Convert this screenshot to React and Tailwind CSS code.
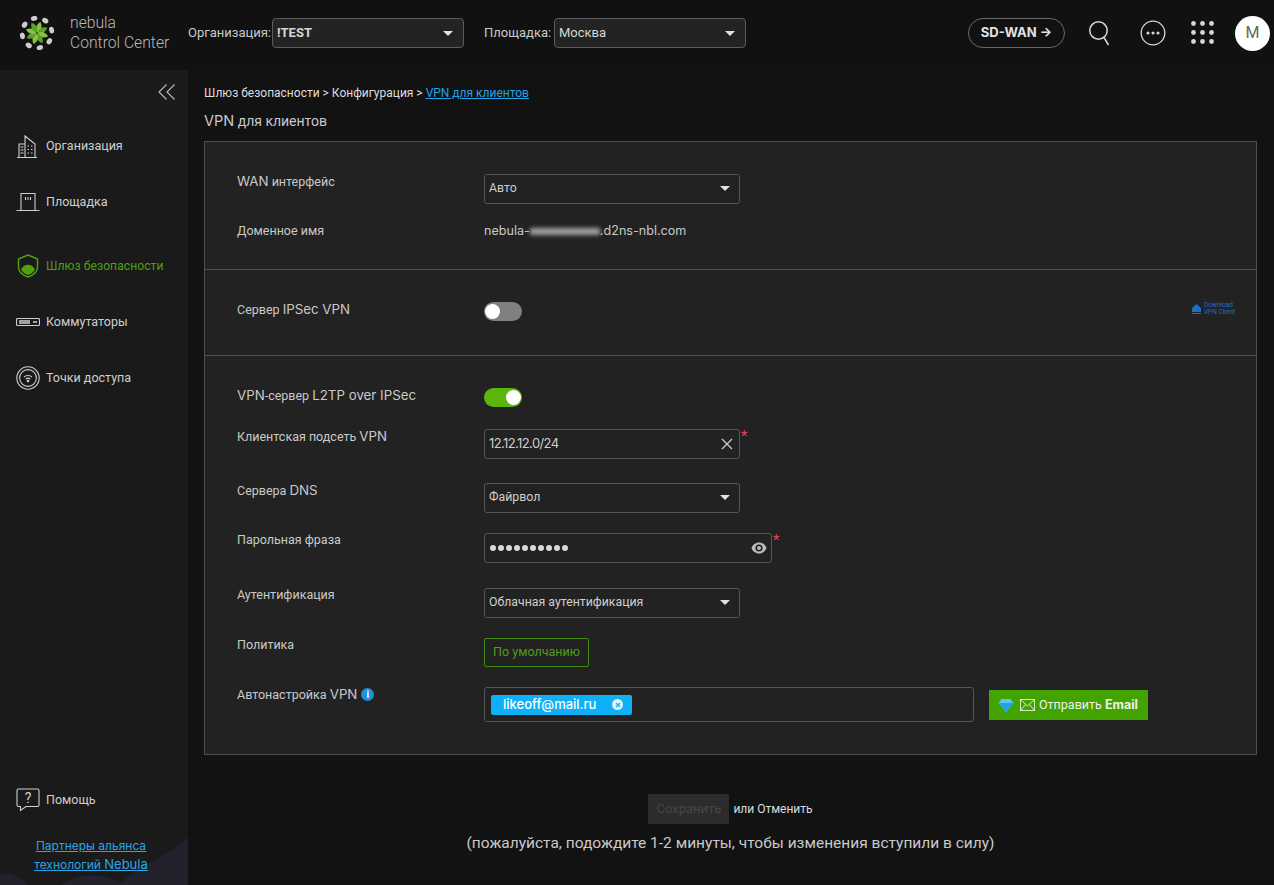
import React from "react";

const INTER = "[font-family:Inter,sans-serif]";

function Logo() {
  const angles = [0, 45, 90, 135, 180, 225, 270, 315];
  return (
    <svg width="34" height="34" viewBox="-17 -17 34 34" className="shrink-0">
      {angles.map((a, i) => (
        <g key={a} transform={`rotate(${a + 10})`}>
          <path d="M0 -0.5 C4 -3 4.5 -7 1.5 -11.5 C-2 -9 -3 -4.5 0 -0.5Z" fill={i % 2 ? "#5f9e2f" : "#86c440"} />
          <ellipse cx="6" cy="-13.6" rx="3.3" ry="2.5" fill="#cdcdcd" transform="rotate(24 6 -13.6)" />
        </g>
      ))}
    </svg>
  );
}

function Caret() {
  return <span className="w-0 h-0 border-l-[5px] border-r-[5px] border-t-[5px] border-l-transparent border-r-transparent border-t-[#e2e2e2]" />;
}

function HeaderSelect({ value, bold }) {
  return (
    <div className={`w-[192px] h-[30px] flex items-center justify-between pl-[4px] pr-[10px] border border-[#5c5c5c] rounded-[4px] bg-[#232323] text-[13px] text-[#d6d6d6] ${bold ? "font-bold" : ""}`}>
      <span>{value}</span>
      <Caret />
    </div>
  );
}

function FormSelect({ value }) {
  return (
    <div className="w-[256px] h-[30px] flex items-center justify-between pl-[4px] pr-[9px] pb-[1px] border border-[#565656] rounded-[3px] text-[12.3px] text-[#cfcfcf]">
      <span>{value}</span>
      <Caret />
    </div>
  );
}

function NavItem({ icon, label, active, className }) {
  return (
    <div className={`flex items-center h-[24px] pl-[16px] ${className}`}>
      <span className="w-[30px] flex items-center">{icon}</span>
      <span className={active ? "text-[12.2px] text-[#4ea00f]" : "text-[12.5px] text-[#cfcfcf]"}>{label}</span>
    </div>
  );
}

function Toggle({ on }) {
  return (
    <div className={`w-[38px] h-[19px] rounded-full flex items-center px-[1px] ${on ? "bg-[#5cb50c] justify-end" : "bg-[#808080] justify-start"}`}>
      <span className="w-[15px] h-[15px] rounded-full bg-white" />
    </div>
  );
}

function Label({ children, className }) {
  return <div className={`w-[247px] shrink-0 text-[12.5px] text-[#c9c9c9] ${className}`}>{children}</div>;
}

function Lat({ children }) {
  return <span className={`text-[13.3px] ${INTER}`}>{children}</span>;
}

const I = { stroke: "#cfcfcf", fill: "none", strokeWidth: 1.1 };

export default function App() {
  return (
    <div className="w-[1274px] h-[885px] overflow-hidden flex flex-col bg-[#121213] [font-family:Roboto,'Liberation_Sans',sans-serif]">
      <header className="h-[70px] shrink-0 bg-[#111112] flex items-center pl-[20px] pr-[4px] pb-[4px]">
        <Logo />
        <div className="ml-[16px] w-[118px] text-[15.7px] leading-[20px] font-light text-[#b9b9b9] whitespace-nowrap">
          <div>nebula</div>
          <div>Control Center</div>
        </div>
        <span className="text-[13px] text-[#c9c9c9] w-[84px]">Организация:</span>
        <HeaderSelect value="!TEST" bold />
        <span className="ml-[20px] text-[13px] text-[#c9c9c9] w-[70px]">Площадка:</span>
        <HeaderSelect value="Москва" />
        <div className={`ml-[222px] w-[97px] h-[30px] rounded-full border border-[#6a6a6a] flex items-center justify-center text-[13px] font-bold text-[#e2e2e2] ${INTER}`}>
          SD-WAN →
        </div>
        <svg width="24" height="26" viewBox="0 0 24 26" className="ml-[23px]" fill="none" stroke="#d8d8d8" strokeWidth="1.5">
          <circle cx="10.5" cy="10.5" r="8.7" />
          <path d="M16 17.5 L20.5 25" />
        </svg>
        <svg width="26" height="26" viewBox="0 0 26 26" className="ml-[28px]" fill="none" stroke="#d8d8d8" strokeWidth="1.3">
          <circle cx="13" cy="13" r="11.8" />
          <circle cx="8" cy="13" r="0.9" fill="#d8d8d8" />
          <circle cx="13" cy="13" r="0.9" fill="#d8d8d8" />
          <circle cx="18" cy="13" r="0.9" fill="#d8d8d8" />
        </svg>
        <svg width="24" height="24" viewBox="0 0 24 24" className="ml-[25px]" fill="#d8d8d8">
          {[2.5, 11.5, 20.5].map((y) => [2.5, 11.5, 20.5].map((x) => <circle key={`${x}-${y}`} cx={x} cy={y} r="2.4" />))}
        </svg>
        <div className="ml-[20px] w-[35px] h-[35px] rounded-full bg-white flex items-center justify-center text-[16px] text-[#666]">M</div>
      </header>

      <div className="flex-1 flex min-h-0">
        <aside className="w-[188px] shrink-0 bg-[#1a1a1b] relative flex flex-col overflow-hidden">
          <svg width="188" height="48" viewBox="0 0 188 48" className="absolute left-0 bottom-0">
            <path d="M0 38 C10 33 20 40 28 48 L0 48Z M62 48 C78 35 105 36 122 46 C135 30 165 22 188 0 L188 48Z" fill="#23212c" />
          </svg>
          <div className="flex justify-end pr-[11px] pt-[12px] relative">
            <svg width="20" height="20" viewBox="0 0 20 20" fill="none" stroke="#bdbdbd" strokeWidth="1.1">
              <path d="M9.5 2.5 L2 10 L9.5 17.5 M17.5 2.5 L10 10 L17.5 17.5" />
            </svg>
          </div>
          <NavItem className="mt-[32px]" label="Организация" icon={
            <svg width="22" height="25" viewBox="0 0 22 25" {...I}><path d="M3 23 V10 H9 M9 23 V2 L19 10 V23 M1 23.5 H21 M4.5 13 H7.5 M4.5 16 H7.5 M4.5 19 H7.5 M11.5 12 H13 M15 12 H16.5 M11.5 15.5 H13 M15 15.5 H16.5 M11.5 19 H13 M15 19 H16.5" /></svg>
          } />
          <NavItem className="mt-[32px]" label="Площадка" icon={
            <svg width="24" height="20" viewBox="0 0 24 20" {...I}><path d="M0.5 18.5 H23.5 M5 18 V1.5 H19 V18 M9.5 5 V8 M12 5 V8 M14.5 5 V8" /></svg>
          } />
          <NavItem className="mt-[40px]" active label="Шлюз безопасности" icon={
            <svg width="22" height="24" viewBox="0 0 22 24" fill="none" stroke="#4ea00f" strokeWidth="1.5" className="ml-[1px]"><path d="M11 1 L20.5 5 V13 C20.5 18 15.5 21.5 11 23 C6.5 21.5 1.5 18 1.5 13 V5Z" /><path d="M4 15.5 C6.5 9 15.5 9 18 15.5 C15.5 19.5 13 20.5 11 21 C9 20.5 6.5 19.5 4 15.5Z" fill="#4ea00f" stroke="none" /></svg>
          } />
          <NavItem className="mt-[32px]" label="Коммутаторы" icon={
            <svg width="24" height="10" viewBox="0 0 24 10" {...I}><rect x="0.5" y="1.5" width="23" height="7" rx="1" /><path d="M3 4 H14 M3 6 H14 M17 5 H21" strokeWidth="1.4" /></svg>
          } />
          <NavItem className="mt-[32px]" label="Точки доступа" icon={
            <svg width="24" height="24" viewBox="0 0 24 24" {...I}><circle cx="12" cy="12" r="11.2" /><circle cx="12" cy="12" r="8.4" /><path d="M8 11 C10 9 14 9 16 11 M9.8 13 C11 12 13 12 14.2 13" /><circle cx="12" cy="15" r="0.8" fill="#cfcfcf" /></svg>
          } />
          <div className="mt-auto relative pb-[11px]">
            <NavItem label="Помощь" icon={
              <svg width="24" height="24" viewBox="0 0 24 24" {...I}><path d="M2.5 1 H21.5 A1.5 1.5 0 0 1 23 2.5 V17 A1.5 1.5 0 0 1 21.5 18.5 H10 L4.5 22.5 V18.5 H2.5 A1.5 1.5 0 0 1 1 17 V2.5 A1.5 1.5 0 0 1 2.5 1Z" /><text x="12" y="15" textAnchor="middle" fontSize="14" fill="#cfcfcf" stroke="none" fontFamily="Roboto">?</text></svg>
            } />
            <div className={`mt-[24px] pr-[6px] text-center text-[12px] leading-[19px] text-[#2aa5e6] underline ${INTER}`}>
              <div>Партнеры альянса</div>
              <div>технологий <span className="text-[13px]">Nebula</span></div>
            </div>
          </div>
        </aside>

        <main className="flex-1 pl-[16px] pr-[17px] min-w-0">
          <div className="pt-[16px] h-[30px] text-[12px] leading-[14px] text-[#dedede] whitespace-nowrap">
            Шлюз безопасности &gt; Конфигурация &gt; <span className="text-[#23a3e4] underline">VPN для клиентов</span>
          </div>
          <h1 className="mt-[12px] text-[14px] leading-[18px] font-normal text-[#c9c9c9]"><span className={`text-[14.5px] ${INTER}`}>VPN</span> для клиентов</h1>
          <section className="mt-[11px] h-[614px] border border-[#4f4f4f] bg-[#222222]">
            <div className="h-[128px] border-b border-[#4f4f4f] pl-[32px] pt-[32px]">
              <div className="flex">
                <Label className="leading-[16px] -mt-[1px]"><Lat>WAN</Lat> интерфейс</Label>
                <FormSelect value="Авто" />
              </div>
              <div className="flex items-center mt-[19px] h-[16px]">
                <Label>Доменное имя</Label>
                <span className={`text-[12.6px] text-[#c9c9c9] whitespace-nowrap ${INTER}`}>
                  nebula-<span className="inline-block w-[70px] h-[7px] align-middle bg-[#a0a0a0] blur-[2px]" />.d2ns-nbl.com
                </span>
              </div>
            </div>
            <div className="h-[86px] border-b border-[#4f4f4f] pl-[32px] pr-[21px] pt-[31px] flex items-start">
              <Label className="leading-[16px]">Сервер <Lat>IPSec VPN</Lat></Label>
              <div className="mt-[1px]"><Toggle /></div>
              <div className="ml-auto mt-[1px] flex items-center gap-[3px] text-[#1b6fc4] text-[6.5px] leading-[6.5px]">
                <svg width="9" height="10" viewBox="0 0 9 10" fill="#1b6fc4"><path d="M4.5 0 L9 4 V8 H0 V4Z" /><path d="M0 9 H9 V10 H0Z" /></svg>
                <span>Download<br />VPN Client</span>
              </div>
            </div>
            <div className="pl-[32px] pt-[31px]">
              <div className="flex h-[20px] items-start">
                <Label className="leading-[16px]"><Lat>VPN</Lat>-сервер <Lat>L2TP over IPSec</Lat></Label>
                <div className="mt-[1px]"><Toggle on /></div>
              </div>
              <div className="flex mt-[22px]">
                <Label className="leading-[16px] -mt-[1px]">Клиентская подсеть <Lat>VPN</Lat></Label>
                <div className={`w-[256px] h-[30px] flex items-center justify-between pl-[4px] pr-[5px] border border-[#565656] rounded-[3px] text-[13px] text-[#cfcfcf] tracking-[-0.6px] ${INTER}`}>
                  <span>12.12.12.0/24</span>
                  <svg width="14" height="14" viewBox="0 0 14 14" fill="none" stroke="#c8c8c8" strokeWidth="1.4"><path d="M2 2 L12 12 M12 2 L2 12" /></svg>
                </div>
                <span className="text-[#e8435a] text-[15px] leading-[15px] ml-[1px]">*</span>
              </div>
              <div className="flex mt-[24px]">
                <Label className="leading-[16px] -mt-[1px]">Сервера <Lat>DNS</Lat></Label>
                <FormSelect value="Файрвол" />
              </div>
              <div className="flex mt-[20px]">
                <Label className="leading-[16px] -mt-[1px]">Парольная фраза</Label>
                <div className="w-[288px] h-[30px] flex items-center justify-between pl-[5px] pr-[4px] border border-[#565656] rounded-[3px]">
                  <div className="flex gap-[2px]">
                    {[0, 1, 2, 3, 4, 5, 6, 7, 8, 9].map((n) => <span key={n} className="w-[6px] h-[6px] rounded-full bg-[#d8d8d8]" />)}
                  </div>
                  <svg width="16" height="12" viewBox="0 0 16 12"><path d="M8 0.5 C4.5 0.5 1.7 2.8 0.5 6 C1.7 9.2 4.5 11.5 8 11.5 C11.5 11.5 14.3 9.2 15.5 6 C14.3 2.8 11.5 0.5 8 0.5Z" fill="#bcbcbc" /><circle cx="8" cy="6" r="3.6" fill="#222" /><circle cx="8" cy="6" r="2" fill="#bcbcbc" /></svg>
                </div>
                <span className="text-[#e8435a] text-[15px] leading-[15px] ml-[1px]">*</span>
              </div>
              <div className="flex mt-[25px]">
                <Label className="leading-[16px] -mt-[1px]">Аутентификация</Label>
                <FormSelect value="Облачная аутентификация" />
              </div>
              <div className="flex mt-[20px]">
                <Label className="leading-[16px] -mt-[1px]">Политика</Label>
                <div className="w-[105px] h-[29px] flex items-center justify-center border border-[#3f8a0c] rounded-[2px] text-[12.5px] text-[#4ea00f]">По умолчанию</div>
              </div>
              <div className="flex mt-[20px]">
                <Label className="leading-[16px] -mt-[1px] flex items-center gap-[4px] self-start">
                  <span>Автонастройка <Lat>VPN</Lat></span>
                  <span className="w-[13px] h-[13px] rounded-full bg-[#1f8fe0] text-white text-[10px] leading-[13px] font-bold text-center">i</span>
                </Label>
                <div className="w-[490px] h-[35px] flex items-center pl-[6px] border border-[#565656] rounded-[3px]">
                  <div className={`w-[141px] h-[20px] bg-[#0eb0f7] rounded-[2px] flex items-center justify-between pl-[12px] pr-[9px] text-[13px] font-medium text-white ${INTER}`}>
                    <span>likeoff@mail.ru</span>
                    <span className="w-[11px] h-[11px] rounded-full bg-[#dff4ff] flex items-center justify-center">
                      <svg width="6" height="6" viewBox="0 0 6 6" fill="none" stroke="#0eb0f7" strokeWidth="1.2"><path d="M1 1 L5 5 M5 1 L1 5" /></svg>
                    </span>
                  </div>
                </div>
                <div className="ml-[15px] mt-[3px] w-[159px] h-[30px] bg-[#43a300] flex items-center pl-[9px] text-[12.5px] text-[#f0f0f0] whitespace-nowrap">
                  <svg width="16" height="15" viewBox="0 0 16 15" className="shrink-0"><path d="M3.5 1 H12.5 L15.5 5 L8 14.5 L0.5 5Z" fill="#58c7ee" /><path d="M0.5 5 H15.5 L8 14.5Z" fill="#27a5d8" /></svg>
                  <svg width="15" height="12" viewBox="0 0 15 12" fill="none" stroke="#e8f2e0" strokeWidth="0.9" className="ml-[6px] mr-[4px] shrink-0"><rect x="0.5" y="0.5" width="14" height="11" /><path d="M0.5 0.5 L7.5 7 L14.5 0.5 M0.5 11.5 L5.5 5.5 M14.5 11.5 L9.5 5.5" /></svg>
                  <span>Отправить <b className={`font-bold ${INTER}`}>Email</b></span>
                </div>
              </div>
            </div>
          </section>
          <div className="mt-[39px] flex items-center justify-center">
            <div className="w-[81px] h-[30px] bg-[#2c2c2c] flex items-center justify-center text-[13px] text-[#474747]">Сохранить</div>
            <span className="ml-[4px] text-[12px] text-[#dcdcdc]">или Отменить</span>
          </div>
          <p className="mt-[9px] text-center text-[15.5px] leading-[20px] text-[#c9c9c9]">(пожалуйста, подождите 1-2 минуты, чтобы изменения вступили в силу)</p>
        </main>
      </div>
    </div>
  );
}
